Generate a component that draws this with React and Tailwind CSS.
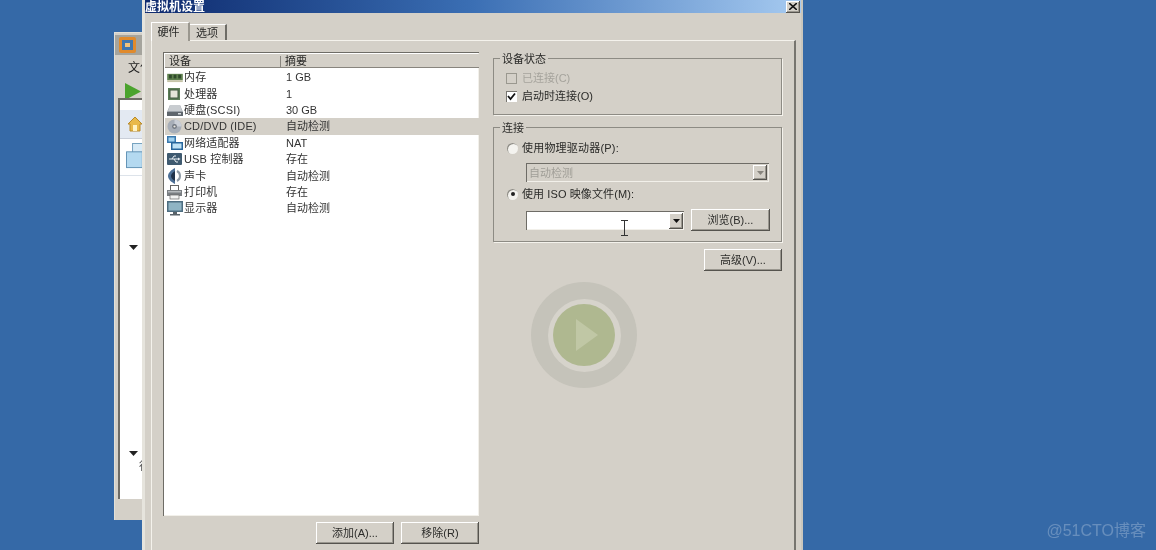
import React from "react";

const FONT = "font-['Liberation_Sans','Noto_Sans_CJK_SC',sans-serif]";
const bevel = "shadow-[inset_-1px_-1px_0_#55534e,inset_1px_1px_0_#ffffff,inset_-2px_-2px_0_#9a978f]";
const sunken = "shadow-[inset_1px_1px_0_#6e6c66,inset_-1px_-1px_0_#f2f0ea]";

const IconMem = () => (
  <svg width="16" height="11" viewBox="0 0 17 12">
    <rect x="0" y="2" width="17" height="7" fill="#5e7f4e" />
    <rect x="2" y="3" width="3" height="4" fill="#2f4a2b" />
    <rect x="7" y="3" width="3" height="4" fill="#2f4a2b" />
    <rect x="12" y="3" width="3" height="4" fill="#2f4a2b" />
    <rect x="0" y="9" width="17" height="2" fill="#c6c4a8" />
  </svg>
);
const IconCpu = () => (
  <svg width="14" height="14" viewBox="0 0 14 14">
    <rect x="1" y="1" width="12" height="12" fill="#5b7c56" />
    <rect x="3" y="3" width="8" height="8" fill="#e4e5d8" stroke="#40583f" />
  </svg>
);
const IconDisk = () => (
  <svg width="16" height="13" viewBox="0 0 16 13">
    <path d="M3 1h10l3 7v4H0V8z" fill="#9aa1a8" />
    <path d="M3 1h10l2 6H1z" fill="#c8ccd0" />
    <rect x="0" y="8" width="16" height="4" fill="#5f666d" />
    <rect x="11" y="9" width="3" height="1.5" fill="#d8dcdf" />
  </svg>
);
const IconCd = () => (
  <svg width="15" height="15" viewBox="0 0 15 15">
    <circle cx="7.5" cy="7.5" r="7" fill="#a7aeb8" />
    <path d="M7.5 .5A7 7 0 0 1 14.5 7.5H7.5z" fill="#c9ced6" />
    <circle cx="7.5" cy="7.5" r="2.4" fill="#6f7680" />
    <circle cx="7.5" cy="7.5" r="1.1" fill="#e8e6df" />
  </svg>
);
const IconNet = () => (
  <svg width="16" height="15" viewBox="0 0 16 15">
    <rect x="0" y="0" width="9" height="7" fill="#3a78ad" />
    <rect x="1.5" y="1.5" width="6" height="4" fill="#9fd0ee" />
    <rect x="4" y="6" width="12" height="8" fill="#27669c" />
    <rect x="5.5" y="7.5" width="9" height="5" fill="#bfe2f5" />
  </svg>
);
const IconUsb = () => (
  <svg width="15" height="13" viewBox="0 0 15 13">
    <rect x="0" y="0" width="15" height="12" rx="1" fill="#3f5a70" />
    <path d="M2 6h10M5 6l2-3h2M7 6l2 3h2" stroke="#e8eef2" strokeWidth="1" fill="none" />
    <path d="M11 4.5l2.5 1.5-2.5 1.5z" fill="#e8eef2" />
  </svg>
);
const IconSound = () => (
  <svg width="14" height="16" viewBox="0 0 14 16">
    <path d="M8 0c-4 2-7 5-7 8s3 6 7 8z" fill="#4c6f96" />
    <path d="M8 3c-2 1-4 3-4 5s2 4 4 5z" fill="#20324a" />
    <path d="M10 3c2 1 3 3 3 5s-1 4-3 5" stroke="#8e9aa6" strokeWidth="2" fill="none" />
  </svg>
);
const IconPrinter = () => (
  <svg width="15" height="15" viewBox="0 0 15 15">
    <rect x="3.5" y=".5" width="8" height="5" fill="#fff" stroke="#666" />
    <rect x="0" y="5" width="15" height="6" fill="#7a7e82" />
    <rect x="1" y="6" width="13" height="1.5" fill="#b6babd" />
    <rect x="3" y="10" width="9" height="4" fill="#f2f2f2" stroke="#666" strokeWidth=".7" />
  </svg>
);
const IconMonitor = () => (
  <svg width="16" height="15" viewBox="0 0 16 15">
    <rect x="0" y="0" width="16" height="11" fill="#4d6d80" />
    <rect x="1.5" y="1.5" width="13" height="8" fill="#8fb4c4" />
    <rect x="6" y="11" width="4" height="2" fill="#59636a" />
    <rect x="3" y="13" width="10" height="1.5" fill="#59636a" />
  </svg>
);

const rows = [
  [IconMem, "内存", "1 GB"],
  [IconCpu, "处理器", "1"],
  [IconDisk, "硬盘(SCSI)", "30 GB"],
  [IconCd, "CD/DVD (IDE)", "自动检测", true],
  [IconNet, "网络适配器", "NAT"],
  [IconUsb, "USB 控制器", "存在"],
  [IconSound, "声卡", "自动检测"],
  [IconPrinter, "打印机", "存在"],
  [IconMonitor, "显示器", "自动检测"],
];

const Btn = ({ w, h = "h-[22px]", children }) => (
  <div className={`${w} ${h} ${bevel} flex items-center justify-center bg-[#d4d0c8] text-[#2c2c2a]`}>{children}</div>
);

const Radio = ({ on }) => (
  <div className="w-[11px] h-[11px] rounded-full bg-[#f4f3ef] shadow-[inset_1px_1px_0_#8e8c85] flex items-center justify-center shrink-0">
    {on && <div className="w-[4px] h-[4px] rounded-full bg-[#222]" />}
  </div>
);

const Arrow = () => (
  <svg width="9" height="5" viewBox="0 0 9 5"><path d="M0 0h9L4.5 5z" fill="#222" /></svg>
);

export default function App() {
  return (
    <div className={`relative w-[1156px] h-[550px] overflow-hidden bg-[#3569a7] text-[11px] leading-[13px] ${FONT} blur-[0.45px]`}>
      {/* window behind */}
      <div className="absolute left-[114px] top-[32px] w-[300px] h-[488px] bg-[#d4d0c8] flex flex-col border-l border-[#e2e0d8] border-t">
        <div className="h-[20px] mt-[2px] bg-[#a5a49d] flex items-center pl-[4px]">
          <svg width="17" height="16" viewBox="0 0 17 16">
            <rect width="17" height="16" rx="2" fill="#e08a2c" />
            <rect x="3" y="3" width="11" height="10" fill="#3f76ae" />
            <rect x="6" y="6" width="5" height="4" fill="#f0c27a" />
          </svg>
        </div>
        <div className="pl-[13px] pt-[7px] h-[22px] text-[12px] text-[#222]">文件</div>
        <div className="pl-[10px] h-[21px] flex items-start pt-[6px]">
          <svg width="16" height="17" viewBox="0 0 16 17"><path d="M0 0l16 8.5L0 17z" fill="#4ba32d" /></svg>
        </div>
        <div className="ml-[3px] mr-[3px] h-[401px] bg-white border-l-2 border-t-2 border-[#6e6c66] flex flex-col">
          <div className="h-[29px] bg-[#e3e9f2] border-b border-[#c9ced8] mt-[10px] pl-[7px] flex items-center">
            <svg width="16" height="16" viewBox="0 0 16 16">
              <path d="M8 1L1 8h2v7h10V8h2z" fill="#e9b949" stroke="#b98a2a" />
              <rect x="6" y="9" width="4" height="6" fill="#fff3c4" />
            </svg>
          </div>
          <div className="mt-[4px] pl-[5px] pb-[6px] border-b border-[#dde3ea]">
            <svg width="30" height="26" viewBox="0 0 30 28">
              <rect x="7" y=".5" width="20" height="17" fill="#d7eaf6" stroke="#6d9cbc" />
              <rect x=".5" y="9.5" width="17" height="17" fill="#b4d9f0" stroke="#5d8fb2" />
            </svg>
          </div>
          <div className="mt-[69px] pl-[9px] h-[206px]"><Arrow /></div>
          <div className="pl-[9px]"><Arrow /></div>
          <div className="pl-[19px] mt-[4px] text-[#555]">行</div>
        </div>
      </div>

      {/* dialog */}
      <div className="absolute left-[142px] top-0 w-[661px] h-[550px] bg-[#d4d0c8] border-l-[3px] border-l-[#e6e4dd] border-r-2 border-r-[#c9c6bd] flex flex-col text-[#2a2a28]">
        <div className="h-[13px] shrink-0 bg-gradient-to-r from-[#0f2a6e] via-[#3b6fb4] to-[#a6caf0] flex items-center justify-between pr-[1px]">
          <span className="font-bold text-white text-[12px] leading-none">虚拟机设置</span>
          <div className={`w-[14px] h-[12px] ${bevel} bg-[#d4d0c8] flex items-center justify-center`}>
            <svg width="8" height="7" viewBox="0 0 8 7"><path d="M0 0l8 7M8 0L0 7" stroke="#111" strokeWidth="1.6" /></svg>
          </div>
        </div>

        <div className="flex items-end pl-[6px] h-[27px] shrink-0">
          <div className="w-[39px] h-[19px] bg-[#d4d0c8] border-t border-l border-white border-r-2 border-r-[#9a978f] flex items-center justify-center pt-[1px] pr-[3px] relative top-[1px]">硬件</div>
          <div className="w-[37px] h-[16px] bg-[#d4d0c8] border-t border-white border-r-2 border-r-[#6e6c66] flex items-center justify-center pt-[1px] pr-[1px]">选项</div>
        </div>

        <div className="ml-[6px] w-[645px] h-[560px] shrink-0 border-t border-l border-[#f4f2ec] border-r-2 border-r-[#77756f] flex pl-[11px] pt-[11px]">
          <div className="w-[316px] flex flex-col shrink-0">
            <div className={`h-[464px] bg-white ${sunken} pl-[2px] pt-[2px] flex flex-col`}>
              <div className="h-[14px] bg-[#d4d0c8] flex items-center border-b border-[#88857e] text-[#2a2a28] pt-[2px]">
                <div className="w-[116px] pl-[4px] border-r border-[#88857e] h-full flex items-center">设备</div>
                <div className="pl-[4px]">摘要</div>
              </div>
              <div className="flex flex-col mt-[1px]">
                {rows.map(([Icon, name, val, sel]) => (
                  <div key={name} className={`h-[16.4px] flex items-center text-[#333] pt-[1px] ${sel ? "bg-[#d4d0c8]" : ""}`}>
                    <div className="w-[19px] pl-[2px] shrink-0 flex justify-start"><Icon /></div>
                    <div className="w-[102px] shrink-0 whitespace-nowrap tracking-[0.15px]">{name}</div>
                    <div className="whitespace-nowrap">{val}</div>
                  </div>
                ))}
              </div>
            </div>
            <div className="flex justify-end gap-[7px] mt-[6px]">
              <Btn w="w-[78px]">添加(A)...</Btn>
              <Btn w="w-[78px]">移除(R)</Btn>
            </div>
          </div>

          <div className="ml-[14px] w-[289px] shrink-0 flex flex-col">
            <fieldset className="h-[63px] border border-[#8d8b84] shadow-[1px_1px_0_#f4f2ec] px-[12px]">
              <legend className="ml-[-6px] px-[2px] leading-[13px] relative top-[1px]">设备状态</legend>
              <div className="flex items-center h-[18px] mt-[4px] text-[#a5a39c] gap-[5px]">
                <div className="w-[11px] h-[11px] border border-[#9a988f] bg-[#d4d0c8]" />
                <span>已连接(C)</span>
              </div>
              <div className="flex items-center h-[18px] gap-[5px]">
                <div className="w-[11px] h-[11px] bg-white shadow-[inset_1px_1px_0_#77756f] flex items-center justify-center">
                  <svg width="9" height="9" viewBox="0 0 9 9"><path d="M1 4l2.5 3L8 1.5" stroke="#111" strokeWidth="1.8" fill="none" /></svg>
                </div>
                <span>启动时连接(O)</span>
              </div>
            </fieldset>

            <fieldset className="mt-[6px] h-[121px] border border-[#8d8b84] shadow-[1px_1px_0_#f4f2ec] pl-[13px]">
              <legend className="ml-[-7px] px-[2px] leading-[13px] relative top-[1px]">连接</legend>
              <div className="flex items-center h-[14px] mt-[7px] gap-[4px]">
                <Radio />
                <span className="tracking-[0.2px]">使用物理驱动器(P):</span>
              </div>
              <div className={`mt-[8px] ml-[19px] w-[243px] h-[19px] ${sunken} flex items-center justify-between pl-[3px] pr-[2px] text-[#a09e97]`}>
                <span className="pt-[1px]">自动检测</span>
                <div className={`w-[14px] h-[15px] ${bevel} flex items-center justify-center`}>
                  <svg width="7" height="4" viewBox="0 0 7 4"><path d="M0 0h7L3.5 4z" fill="#88857e" /></svg>
                </div>
              </div>
              <div className="flex items-center h-[14px] mt-[5px] gap-[4px]">
                <Radio on />
                <span className="tracking-[0.1px]">使用 ISO 映像文件(M):</span>
              </div>
              <div className="flex items-start ml-[19px] mt-[8px]">
                <div className={`w-[158px] h-[19px] mt-[2px] bg-white ${sunken} flex justify-end items-center pr-[1px]`}>
                  <div className={`w-[14px] h-[16px] bg-[#d4d0c8] ${bevel} flex items-center justify-center`}>
                    <svg width="7" height="4" viewBox="0 0 7 4"><path d="M0 0h7L3.5 4z" fill="#111" /></svg>
                  </div>
                </div>
                <div className="ml-[7px]"><Btn w="w-[79px]">浏览(B)...</Btn></div>
              </div>
            </fieldset>

            <div className="flex justify-end mt-[7px]">
              <Btn w="w-[78px]">高级(V)...</Btn>
            </div>
          </div>
        </div>
      </div>

      {/* play overlay */}
      <div className="absolute left-[531px] top-[282px] w-[106px] h-[106px] rounded-full bg-[#c5c3ba] flex items-center justify-center">
        <div className="w-[73px] h-[73px] rounded-full bg-[#d6d3cb] flex items-center justify-center">
          <div className="w-[62px] h-[62px] rounded-full bg-[#afb890] flex items-center justify-center pl-[6px]">
            <svg width="22" height="32" viewBox="0 0 22 32"><path d="M0 0l22 16L0 32z" fill="#c0c7a5" /></svg>
          </div>
        </div>
      </div>

      {/* I-beam cursor */}
      <svg className="absolute left-[620px] top-[220px]" width="9" height="16" viewBox="0 0 9 16">
        <path d="M1 .5h7M1 15.5h7M4.5 .5v15" stroke="#333" strokeWidth="1" fill="none" />
      </svg>

      {/* watermark */}
      <div className="absolute right-[10px] top-[522px] text-[16px] leading-[18px] text-white/25 whitespace-nowrap">@51CTO博客</div>
    </div>
  );
}
